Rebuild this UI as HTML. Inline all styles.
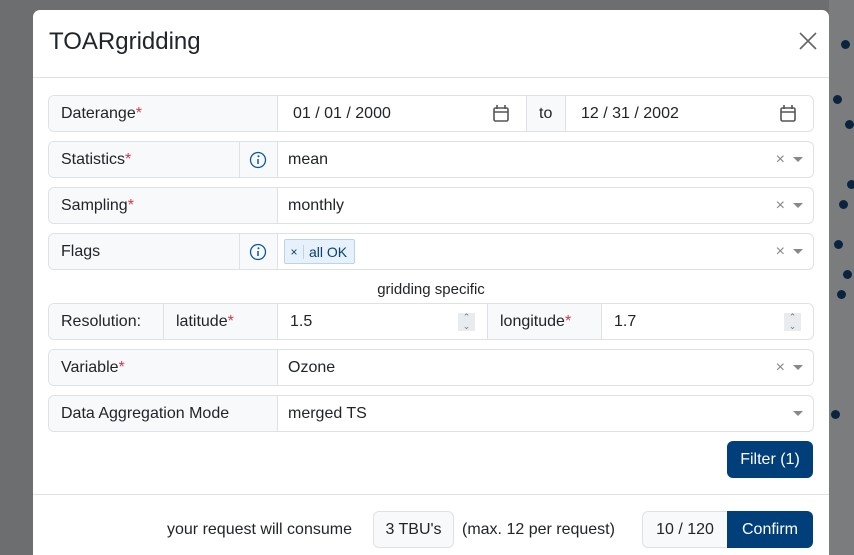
<!DOCTYPE html>
<html><head><meta charset="utf-8"><style>
*{box-sizing:border-box}
html{overflow:hidden;height:555px}
body{margin:0;width:854px;height:555px;overflow:hidden;background:#6c6e6f;font-family:"Liberation Sans",sans-serif;font-size:16px;color:#212529;position:relative}
.map{position:absolute;left:829px;top:0;width:25px;height:555px;background:#7a7c7d}
.dot{position:absolute;width:9px;height:9px;border-radius:50%;background:#0a2440}
.modal{position:absolute;left:33px;top:10px;width:796px;height:545px;background:#fff;border-radius:7px 7px 0 0}
.title{position:absolute;left:16px;top:18px;font-size:24px}
.close{position:absolute;right:12px;top:22px}
.hr{position:absolute;left:0;right:0;height:1px;background:#dee2e6}
.row{position:absolute;left:15px;width:766px;height:37px;border:1px solid #dee2e6;border-radius:6px;overflow:hidden}
.c{position:absolute;top:0;bottom:0;display:flex;align-items:center;padding-left:12px;border-right:1px solid #dee2e6}
.g{background:#f8f9fa}
.r{color:#dc3545}
.xd{position:absolute;right:10px;top:0;bottom:0;display:flex;align-items:center;color:#888;font-size:16px;gap:8px}
.tri{width:0;height:0;border-left:5px solid transparent;border-right:5px solid transparent;border-top:5px solid #888}
.btn{position:absolute;background:#003f7a;color:#fff;border-radius:6px;display:flex;align-items:center;justify-content:center}
</style></head><body>
<div class="map">
<div class="dot" style="left:12px;top:40px"></div><div class="dot" style="left:18px;top:180px"></div><div class="dot" style="left:10px;top:200px"></div><div class="dot" style="left:14px;top:270px"></div><div class="dot" style="left:5px;top:240px"></div><div class="dot" style="left:16px;top:120px"></div><div class="dot" style="left:8px;top:290px"></div><div class="dot" style="left:2px;top:410px"></div><div class="dot" style="left:4px;top:95px"></div>
</div>
<div class="modal">
<div class="title">TOARgridding</div>
<svg class="close" width="18" height="18" viewBox="0 0 18 18"><path d="M1 1L17 17M17 1L1 17" stroke="#666" stroke-width="1.6"/></svg>
<div class="hr" style="top:67px"></div>

<div class="row" style="top:85px">
<div class="c g" style="left:0;width:229px">Daterange<span class="r">*</span></div>
<div class="c" style="left:229px;width:249px;padding-left:15px">01 / 01 / 2000</div>
<svg style="position:absolute;left:443px;top:8px" width="18" height="19" viewBox="0 0 18 19"><rect x="2" y="4" width="14" height="13" rx="1.5" fill="none" stroke="#555" stroke-width="1.6"/><path d="M2 8h14M5 1v4M13 1v4" stroke="#555" stroke-width="1.6"/></svg>
<div class="c g" style="left:478px;width:39px">to</div>
<div class="c" style="left:517px;width:249px;border:0;padding-left:15px">12 / 31 / 2002</div>
<svg style="position:absolute;left:730px;top:8px" width="18" height="19" viewBox="0 0 18 19"><rect x="2" y="4" width="14" height="13" rx="1.5" fill="none" stroke="#555" stroke-width="1.6"/><path d="M2 8h14M5 1v4M13 1v4" stroke="#555" stroke-width="1.6"/></svg>
</div>

<div class="row" style="top:131px">
<div class="c g" style="left:0;width:191px">Statistics<span class="r">*</span></div>
<div class="c g" style="left:191px;width:38px;padding-left:9px"><svg width="18" height="18" viewBox="0 0 18 18"><circle cx="9" cy="9" r="7.5" fill="none" stroke="#0a58a0" stroke-width="1.3"/><circle cx="9.5" cy="5.3" r="1" fill="#0a58a0"/><path d="M9 8v5" stroke="#0a58a0" stroke-width="1.5"/></svg></div>
<div class="c" style="left:229px;border:0;padding-left:10px">mean</div>
<div class="xd">×<div class="tri"></div></div>
</div>

<div class="row" style="top:177px">
<div class="c g" style="left:0;width:229px">Sampling<span class="r">*</span></div>
<div class="c" style="left:229px;border:0;padding-left:10px">monthly</div>
<div class="xd">×<div class="tri"></div></div>
</div>

<div class="row" style="top:223px">
<div class="c g" style="left:0;width:191px">Flags</div>
<div class="c g" style="left:191px;width:38px;padding-left:9px"><svg width="18" height="18" viewBox="0 0 18 18"><circle cx="9" cy="9" r="7.5" fill="none" stroke="#0a58a0" stroke-width="1.3"/><circle cx="9.5" cy="5.3" r="1" fill="#0a58a0"/><path d="M9 8v5" stroke="#0a58a0" stroke-width="1.5"/></svg></div>
<div style="position:absolute;left:235px;top:5px;height:25px;width:71px;background:#e6f1fb;border:1px solid #b8d4ee;border-radius:2px;color:#0a3f70;font-size:14px;display:flex;align-items:center"><span style="width:19px;text-align:center;border-right:1px solid #b8d4ee;font-size:12px">×</span><span style="padding-left:5px">all OK</span></div>
<div class="xd">×<div class="tri"></div></div>
</div>

<div style="position:absolute;left:0;width:796px;top:271px;text-align:center;font-size:15px">gridding specific</div>

<div class="row" style="top:293px">
<div class="c g" style="left:0;width:115px">Resolution:</div>
<div class="c g" style="left:115px;width:114px">latitude<span class="r">*</span></div>
<div class="c" style="left:229px;width:210px">1.5</div>
<div style="position:absolute;left:409px;top:9px;width:17px;height:18px;background:#e9ecef;font-size:9px;color:#777;text-align:center;line-height:9px">⌃<br>⌄</div>
<div class="c g" style="left:439px;width:114px">longitude<span class="r">*</span></div>
<div class="c" style="left:553px;border:0">1.7</div>
<div style="position:absolute;left:735px;top:9px;width:17px;height:18px;background:#e9ecef;font-size:9px;color:#777;text-align:center;line-height:9px">⌃<br>⌄</div>
</div>

<div class="row" style="top:339px">
<div class="c g" style="left:0;width:229px">Variable<span class="r">*</span></div>
<div class="c" style="left:229px;border:0;padding-left:10px">Ozone</div>
<div class="xd">×<div class="tri"></div></div>
</div>

<div class="row" style="top:385px">
<div class="c g" style="left:0;width:229px">Data Aggregation Mode</div>
<div class="c" style="left:229px;border:0;padding-left:10px">merged TS</div>
<div class="xd"><div class="tri"></div></div>
</div>

<div class="btn" style="left:694px;top:431px;width:86px;height:37px">Filter (1)</div>

<div class="hr" style="top:484px"></div>
<div style="position:absolute;left:134px;top:511px">your request will consume</div>
<div style="position:absolute;left:340px;top:501px;width:81px;height:37px;border:1px solid #dee2e6;border-radius:6px;background:#f8f9fa;display:flex;align-items:center;justify-content:center">3 TBU's</div>
<div style="position:absolute;left:429px;top:511px">(max. 12 per request)</div>
<div style="position:absolute;left:609px;top:501px;width:86px;height:37px;border:1px solid #dee2e6;border-radius:6px 0 0 6px;background:#f8f9fa;display:flex;align-items:center;justify-content:center">10 / 120</div>
<div class="btn" style="left:694px;top:501px;width:86px;height:37px;border-radius:0 6px 6px 0">Confirm</div>
</div>
</body></html>
